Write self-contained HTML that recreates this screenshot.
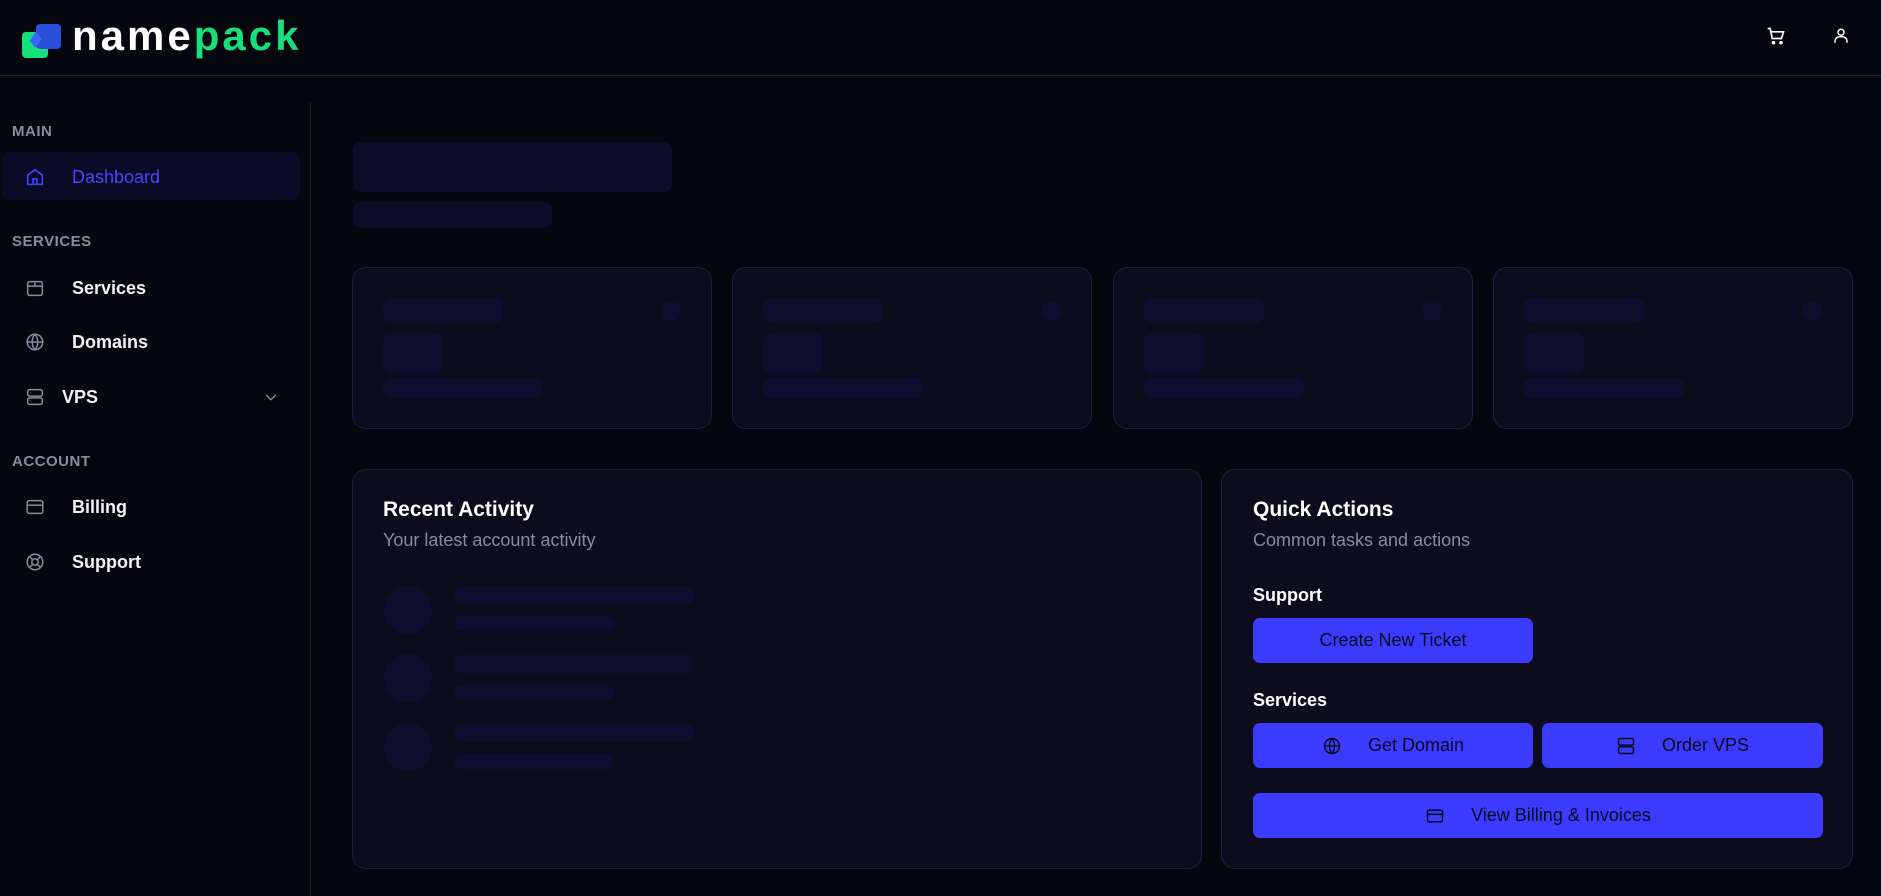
<!DOCTYPE html>
<html><head><meta charset="utf-8"><style>
*{box-sizing:border-box;margin:0;padding:0}
body{width:1881px;height:896px;background:#06060f;font-family:"Liberation Sans",sans-serif;color:#fff;position:relative;overflow:hidden}
.abs{position:absolute}
.hdr{left:0;top:0;width:1881px;height:76px;border-bottom:1px solid #22224a}
.side{left:310px;top:102px;width:1px;height:794px;background:#1c1c3a}
.lbl{left:12px;font-size:15px;font-weight:bold;color:#8a8aa0;letter-spacing:.5px}
.item{left:72px;font-size:18px;font-weight:bold;color:#f0f0f5}
.ico{left:24px;width:22px;height:22px}
.sk{background:#0e0e2e;border-radius:8px}
.card{background:#0c0c1c;border:1px solid #1e1e48;border-radius:14px}
.btn{background:#3b3bff;border-radius:7px;color:#0b0b20;font-size:18px;display:flex;align-items:center;justify-content:center;gap:26px}
</style></head><body>
<div class="abs hdr"></div>
<svg class="abs" style="left:22px;top:22px" width="40" height="38" viewBox="0 0 40 38">
<rect x="0" y="10" width="26" height="26" rx="4" fill="#16e07a"/>
<rect x="14" y="2" width="25" height="25" rx="4" fill="#2a4fd8"/>
<path d="M13 10 L20 17 L13 26 L8 19 Z" fill="#3a66ff"/>
</svg>
<div class="abs" style="left:72px;top:15px;font-size:42px;font-weight:bold;letter-spacing:3px;line-height:42px"><span style="color:#fff">name</span><span style="color:#16e07a">pack</span></div>
<svg class="abs" style="left:1766px;top:26px" width="20" height="20" viewBox="0 0 24 24" fill="none" stroke="#fff" stroke-width="2"><path d="M2 3h3l2.5 12h11L21 7H6"/><circle cx="9" cy="20" r="1.2" fill="#fff"/><circle cx="18" cy="20" r="1.2" fill="#fff"/></svg>
<svg class="abs" style="left:1832px;top:26px" width="18" height="20" viewBox="0 0 24 24" fill="none" stroke="#fff" stroke-width="2"><circle cx="12" cy="7" r="4"/><path d="M4 21v-2a6 6 0 0 1 6-6h4a6 6 0 0 1 6 6v2"/></svg>

<div class="abs side"></div>
<div class="abs lbl" style="top:123px">MAIN</div>
<div class="abs" style="left:2px;top:152px;width:298px;height:48px;background:#0b0b28;border-radius:8px"></div>
<svg class="abs ico" style="top:166px" viewBox="0 0 24 24" fill="none" stroke="#4040ff" stroke-width="1.8"><path d="M4 10l8-6 8 6v10H4z"/><path d="M10 20v-6h4v6"/></svg>
<div class="abs item" style="top:167px;color:#4747ff;font-weight:normal">Dashboard</div>
<div class="abs lbl" style="top:233px">SERVICES</div>
<svg class="abs ico" style="top:277px" viewBox="0 0 24 24" fill="none" stroke="#8a8aa0" stroke-width="1.6"><rect x="4" y="5" width="16" height="15" rx="2"/><path d="M4 10h16M12 5v5"/></svg>
<div class="abs item" style="top:278px">Services</div>
<svg class="abs ico" style="top:331px" viewBox="0 0 24 24" fill="none" stroke="#8a8aa0" stroke-width="1.6"><circle cx="12" cy="12" r="8.5"/><path d="M3.5 12h17M12 3.5c-4 4.5-4 12.5 0 17M12 3.5c4 4.5 4 12.5 0 17"/></svg>
<div class="abs item" style="top:332px">Domains</div>
<svg class="abs ico" style="top:386px" viewBox="0 0 24 24" fill="none" stroke="#8a8aa0" stroke-width="1.6"><rect x="4" y="4" width="16" height="7" rx="2"/><rect x="4" y="13" width="16" height="7" rx="2"/><path d="M7 7.5h.5M7 16.5h.5"/></svg>
<div class="abs item" style="top:387px;left:62px">VPS</div>
<svg class="abs" style="left:263px;top:389px" width="16" height="16" viewBox="0 0 24 24" fill="none" stroke="#8a8aa0" stroke-width="2"><path d="M5 9l7 7 7-7"/></svg>
<div class="abs lbl" style="top:453px">ACCOUNT</div>
<svg class="abs ico" style="top:496px" viewBox="0 0 24 24" fill="none" stroke="#8a8aa0" stroke-width="1.6"><rect x="3.5" y="5" width="17" height="14" rx="2"/><path d="M3.5 10h17"/></svg>
<div class="abs item" style="top:497px">Billing</div>
<svg class="abs ico" style="top:551px" viewBox="0 0 24 24" fill="none" stroke="#8a8aa0" stroke-width="1.6"><circle cx="12" cy="12" r="8.5"/><circle cx="12" cy="12" r="3.5"/><path d="M6 6l3.5 3.5M18 6l-3.5 3.5M6 18l3.5-3.5M18 18l-3.5-3.5"/></svg>
<div class="abs item" style="top:552px">Support</div>

<div class="abs sk" style="left:353px;top:142px;width:319px;height:50px;background:#0d0d2a"></div>
<div class="abs sk" style="left:353px;top:202px;width:199px;height:26px;background:#0d0d2a"></div>

<div class="abs card" style="left:352px;top:267px;width:360px;height:162px"></div>
<div class="abs card" style="left:732px;top:267px;width:360px;height:162px"></div>
<div class="abs card" style="left:1113px;top:267px;width:360px;height:162px"></div>
<div class="abs card" style="left:1493px;top:267px;width:360px;height:162px"></div>
<div class="abs sk" style="left:383px;top:298px;width:120px;height:25px"></div><div class="abs" style="left:661px;top:301px;width:20px;height:20px;border-radius:50%;background:#0e0e2e"></div><div class="abs sk" style="left:383px;top:333px;width:60px;height:40px"></div><div class="abs sk" style="left:383px;top:378px;width:160px;height:20px"></div>
<div class="abs sk" style="left:763px;top:298px;width:120px;height:25px"></div><div class="abs" style="left:1041px;top:301px;width:20px;height:20px;border-radius:50%;background:#0e0e2e"></div><div class="abs sk" style="left:763px;top:333px;width:60px;height:40px"></div><div class="abs sk" style="left:763px;top:378px;width:160px;height:20px"></div>
<div class="abs sk" style="left:1144px;top:298px;width:120px;height:25px"></div><div class="abs" style="left:1422px;top:301px;width:20px;height:20px;border-radius:50%;background:#0e0e2e"></div><div class="abs sk" style="left:1144px;top:333px;width:60px;height:40px"></div><div class="abs sk" style="left:1144px;top:378px;width:160px;height:20px"></div>
<div class="abs sk" style="left:1524px;top:298px;width:120px;height:25px"></div><div class="abs" style="left:1802px;top:301px;width:20px;height:20px;border-radius:50%;background:#0e0e2e"></div><div class="abs sk" style="left:1524px;top:333px;width:60px;height:40px"></div><div class="abs sk" style="left:1524px;top:378px;width:160px;height:20px"></div>

<div class="abs card" style="left:352px;top:469px;width:850px;height:400px"></div>
<div class="abs" style="left:383px;top:498px;font-size:21px;font-weight:bold">Recent Activity</div>
<div class="abs" style="left:383px;top:530px;font-size:18px;color:#8a8aa0">Your latest account activity</div>
<div class="abs" style="left:384px;top:586px;width:48px;height:48px;border-radius:50%;background:#0e0e2e"></div>
<div class="abs sk" style="left:454px;top:586px;width:240px;height:18px"></div><div class="abs sk" style="left:454px;top:616px;width:160px;height:15px"></div>
<div class="abs" style="left:384px;top:654px;width:48px;height:48px;border-radius:50%;background:#0e0e2e"></div>
<div class="abs sk" style="left:454px;top:655px;width:240px;height:18px"></div><div class="abs sk" style="left:454px;top:685px;width:160px;height:15px"></div>
<div class="abs" style="left:384px;top:723px;width:48px;height:48px;border-radius:50%;background:#0e0e2e"></div>
<div class="abs sk" style="left:454px;top:724px;width:240px;height:18px"></div><div class="abs sk" style="left:454px;top:754px;width:160px;height:15px"></div>

<div class="abs card" style="left:1221px;top:469px;width:632px;height:400px"></div>
<div class="abs" style="left:1253px;top:498px;font-size:21px;font-weight:bold">Quick Actions</div>
<div class="abs" style="left:1253px;top:530px;font-size:18px;color:#8a8aa0">Common tasks and actions</div>
<div class="abs" style="left:1253px;top:585px;font-size:18px;font-weight:bold">Support</div>
<div class="abs btn" style="left:1253px;top:618px;width:280px;height:45px">Create New Ticket</div>
<div class="abs" style="left:1253px;top:690px;font-size:18px;font-weight:bold">Services</div>
<div class="abs btn" style="left:1253px;top:723px;width:280px;height:45px"><svg width="20" height="20" viewBox="0 0 24 24" fill="none" stroke="#0b0b20" stroke-width="1.8"><circle cx="12" cy="12" r="9"/><path d="M3 12h18M12 3c-4 4.5-4 13.5 0 18M12 3c4 4.5 4 13.5 0 18"/></svg>Get Domain</div>
<div class="abs btn" style="left:1542px;top:723px;width:281px;height:45px"><svg width="20" height="20" viewBox="0 0 24 24" fill="none" stroke="#0b0b20" stroke-width="1.8"><rect x="3" y="3" width="18" height="8" rx="2"/><rect x="3" y="13" width="18" height="8" rx="2"/><path d="M6.5 7h.5M6.5 17h.5"/></svg>Order VPS</div>
<div class="abs btn" style="left:1253px;top:793px;width:570px;height:45px"><svg width="20" height="20" viewBox="0 0 24 24" fill="none" stroke="#0b0b20" stroke-width="1.8"><rect x="3" y="5" width="18" height="14" rx="2"/><path d="M3 10h18"/></svg>View Billing &amp; Invoices</div>
</body></html>
